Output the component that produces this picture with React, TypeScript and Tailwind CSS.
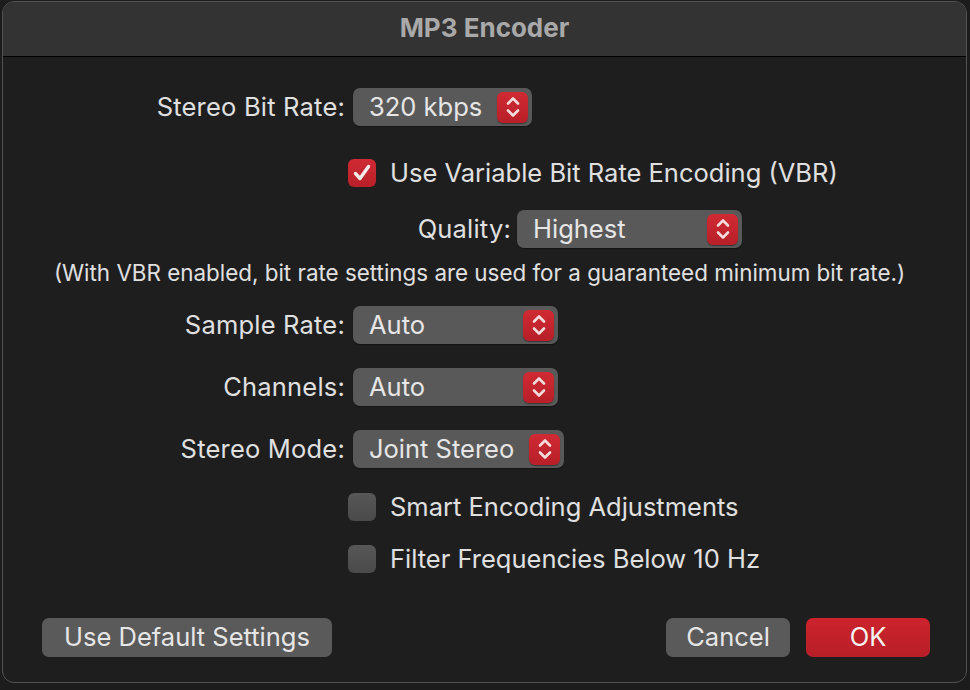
import React from 'react';

const font = { fontFamily: 'Inter, "Noto Sans", sans-serif' };

const Stepper: React.FC = () => (
  <div className="w-[31px] h-[31px] rounded-[6px] bg-gradient-to-b from-[#d02a33] to-[#b81f28] flex items-center justify-center shadow-[0_1px_1px_rgba(0,0,0,0.4)]">
    <svg width="16" height="24" viewBox="0 0 16 24" fill="none" stroke="#f4dcdc" strokeWidth="2.6" strokeLinecap="round" strokeLinejoin="round">
      <path d="M3 8.5 L8 3.5 L13 8.5" />
      <path d="M3 15.5 L8 20.5 L13 15.5" />
    </svg>
  </div>
);

const Popup: React.FC<{ value: string; width: string }> = ({ value, width }) => (
  <div className={`${width} h-[38px] rounded-[7px] bg-[#595959] flex items-center justify-between pl-[16px] pr-[4px] shadow-[0_1px_1px_rgba(0,0,0,0.35)]`}>
    <span className="text-[25.5px] text-[#e6e6e6]">{value}</span>
    <Stepper />
  </div>
);

const Checkbox: React.FC<{ checked?: boolean }> = ({ checked }) =>
  checked ? (
    <div className="w-[28px] h-[28px] rounded-[6px] bg-gradient-to-b from-[#d02a33] to-[#b81f28] flex items-center justify-center">
      <svg width="22" height="22" viewBox="0 0 22 22" fill="none" stroke="#f8eaea" strokeWidth="3.4" strokeLinecap="round" strokeLinejoin="round">
        <path d="M4.5 11.5 L9 16.5 L17.5 4.5" />
      </svg>
    </div>
  ) : (
    <div className="w-[28px] h-[28px] rounded-[6px] bg-gradient-to-b from-[#575757] to-[#4a4a4a]" />
  );

const LabelRow: React.FC<{ label: string; children: React.ReactNode; className?: string }> = ({ label, children, className }) => (
  <div className={`flex items-center h-[38px] ${className ?? ''}`}>
    <div className="w-[344px] text-right pr-[2px] text-[25.5px] tracking-[0.2px] text-[#e0e0e0] shrink-0 whitespace-nowrap">{label}</div>
    <div className="ml-[6px]">{children}</div>
  </div>
);

const CheckRow: React.FC<{ label: string; checked?: boolean; className?: string }> = ({ label, checked, className }) => (
  <div className={`flex items-center h-[38px] pl-[345px] ${className ?? ''}`}>
    <Checkbox checked={checked} />
    <span className="ml-[14px] text-[25.5px] text-[#e0e0e0] whitespace-nowrap">{label}</span>
  </div>
);

const App: React.FC = () => {
  return (
    <div className="w-[970px] h-[690px] bg-[#1c1c1c] overflow-hidden" style={font}>
      <div className="ml-[2px] mt-[1px] w-[965px] h-[682px] rounded-[12px] border border-[#525252] bg-[#1e1e1e] overflow-hidden flex flex-col">
        {/* Title bar */}
        <div className="h-[55px] bg-[#333333] border-b border-black flex items-center justify-center shrink-0 pb-[4px]">
          <span className="text-[26px] font-bold text-[#a9a9a9]">MP3 Encoder</span>
        </div>

        <div className="flex flex-col">
          <LabelRow label="Stereo Bit Rate:" className="mt-[31px]">
            <Popup value="320 kbps" width="w-[179px]" />
          </LabelRow>

          <CheckRow label="Use Variable Bit Rate Encoding (VBR)" checked className="mt-[28px]" />

          <div className="flex items-center h-[38px] mt-[18px]">
            <div className="w-[508px] text-right text-[25.5px] tracking-[0.2px] text-[#e0e0e0]">Quality:</div>
            <div className="ml-[6px]">
              <Popup value="Highest" width="w-[225px]" />
            </div>
          </div>

          <div className="mt-[13px] h-[24px] text-center text-[22.4px] text-[#e0e0e0] leading-[24px] pr-[10px] whitespace-nowrap">
            (With VBR enabled, bit rate settings are used for a guaranteed minimum bit rate.)
          </div>

          <LabelRow label="Sample Rate:" className="mt-[21px]">
            <Popup value="Auto" width="w-[205px]" />
          </LabelRow>

          <LabelRow label="Channels:" className="mt-[24px]">
            <Popup value="Auto" width="w-[205px]" />
          </LabelRow>

          <LabelRow label="Stereo Mode:" className="mt-[24px]">
            <Popup value="Joint Stereo" width="w-[211px]" />
          </LabelRow>

          <CheckRow label="Smart Encoding Adjustments" className="mt-[20px]" />
          <CheckRow label="Filter Frequencies Below 10 Hz" className="mt-[14px]" />

          {/* Buttons */}
          <div className="flex items-center mt-[40px] pl-[39px] pr-[36px]">
            <button className="w-[290px] h-[39px] rounded-[7px] bg-[#5a5a5a] text-[25.5px] text-[#e6e6e6]">
              Use Default Settings
            </button>
            <div className="flex-1" />
            <button className="w-[124px] h-[39px] rounded-[7px] bg-[#5a5a5a] text-[25.5px] text-[#e6e6e6]">
              Cancel
            </button>
            <button className="ml-[16px] w-[124px] h-[39px] rounded-[7px] bg-gradient-to-b from-[#cc232d] to-[#b81f28] text-[25.5px] text-[#f4f4f4]">
              OK
            </button>
          </div>
        </div>
      </div>
    </div>
  );
};

export default App;
